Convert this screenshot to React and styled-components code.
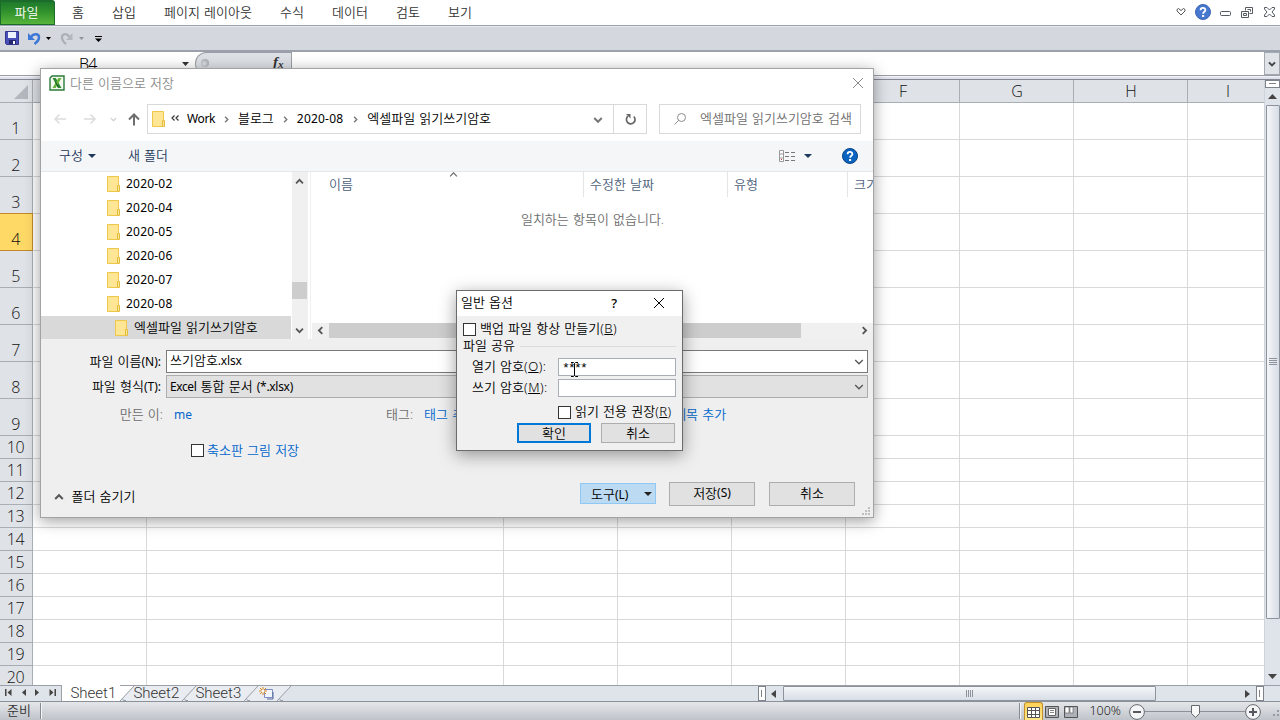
import React from "react";
import styled, { createGlobalStyle, css } from "styled-components";

const Global = createGlobalStyle`
  * { box-sizing: border-box; }
  html, body { margin: 0; padding: 0; overflow: hidden; background: #fff; }
  body { font-family: "Noto Sans", "Noto Sans CJK KR", sans-serif; font-size: 13px; font-weight: 350; }
`;

const Window = styled.div`
  position: relative;
  width: 1280px;
  height: 720px;
  display: flex;
  flex-direction: column;
  overflow: hidden;
  color: #000;
  white-space: nowrap;
  word-spacing: 0.8px;
`;

const Label = styled.span`
  flex: none;
  color: ${(p) => p.$color || "#000"};
  font-size: ${(p) => p.$size || 13}px;
  letter-spacing: ${(p) => p.$track || 0}px;
  line-height: 18px;
  margin-left: ${(p) => p.$ml || 0}px;
  margin-top: ${(p) => p.$mt || 0}px;
  font-weight: ${(p) => p.$weight || 350};
`;
const En = styled.span`
  font-size: ${(p) => p.$size || 12}px;
  font-weight: ${(p) => p.$weight || 400};
  letter-spacing: ${(p) => p.$track || 0}px;
`;
const Spacer = styled.div`
  flex: ${(p) => (p.$w ? `0 0 ${p.$w}px` : "1 1 0")};
`;
const Icon = styled.svg`
  display: block;
  flex: none;
  overflow: visible;
  margin-left: ${(p) => p.$ml || 0}px;
  margin-top: ${(p) => p.$mt || 0}px;
`;

/* ---------- ribbon ---------- */
const Ribbon = styled.div`
  flex: 0 0 26px;
  display: flex;
  border-bottom: 1px solid #9aa2ae;
  background: #fff;
`;
const FileTab = styled.div`
  width: 55px;
  height: 25px;
  display: flex;
  justify-content: center;
  align-items: center;
  padding: 0 2px 3px 0;
  color: #fff;
  background: linear-gradient(#1f7a2c, #2f8f2c 40%, #57b53a);
  border: 1px solid #1b6b2b;
  border-top-width: 2px;
  border-radius: 0 3px 0 0;
`;
const RibbonTab = styled.div`
  width: ${(p) => p.$w}px;
  height: 25px;
  display: flex;
  justify-content: center;
  align-items: center;
  padding-bottom: 2px;
`;
const QuickBar = styled.div`
  flex: 0 0 26px;
  display: flex;
  align-items: center;
  padding-bottom: 1px;
  background: #d4d8de;
  border-top: 1px solid #e6e9ee;
  border-bottom: 2px solid #9ba1ab;
`;

/* ---------- formula bar ---------- */
const FormulaBar = styled.div`
  flex: 0 0 24px;
  display: flex;
  border-bottom: 1px solid #9a9da3;
  background: #fff;
`;
const NameBox = styled.div`
  width: 195px;
  display: flex;
  align-items: center;
`;
const FxBox = styled.div`
  width: 97px;
  display: flex;
  align-items: center;
  padding-bottom: 3px;
  background: #dde1e6;
  border: solid #9a9da3;
  border-width: 1px 1px 0 1px;
  border-radius: 12px 0 0 12px;
`;
const Knob = styled.div`
  width: 8px;
  height: 8px;
  margin-left: 5px;
  border-radius: 50%;
  background: radial-gradient(circle at 40% 60%, #e3e6ea, #b3b7bd 60%, #a2a6ad);
`;
const Fx = styled.span`
  margin-left: 64px;
  font: italic bold 15px "Liberation Serif", serif;
  color: #333;
  sub { font-size: 11px; vertical-align: -1px; line-height: 0; }
`;
const ExpandButton = styled.div`
  width: 16px;
  height: 23px;
  display: flex;
  align-items: center;
  justify-content: center;
  background: #e0e3e8;
  border: 1px solid #a4a9b0;
`;
const Gutter = styled.div`
  flex: 0 0 4px;
  background: #e0e1ee;
  border-bottom: 1px solid #85888e;
  border-top: 1px solid #f3f3f9;
`;

/* ---------- sheet ---------- */
const SheetArea = styled.div`
  flex: 0 0 605px;
  display: flex;
  overflow: hidden;
`;
const Sheet = styled.div`
  width: 1264px;
  overflow: hidden;
`;
const SheetRow = styled.div`
  display: flex;
  height: ${(p) => p.$h}px;
`;
const headCell = css`
  flex: none;
  display: flex;
  justify-content: center;
  background: #dfe2e7;
  border-right: 1px solid #a9aeb5;
  border-bottom: 1px solid #a9aeb5;
  color: #111;
  font-family: "Open Sans", sans-serif;
  font-size: 16px;
  line-height: 22px;
`;
const ColHead = styled.div`
  ${headCell}
  width: ${(p) => p.$w}px;
  padding-left: 1px;
`;
const Corner = styled(ColHead)`
  align-items: flex-end;
  justify-content: flex-end;
  padding: 0 4px 3px 0;
`;
const RowHead = styled.div`
  ${headCell}
  width: 33px;
  align-items: flex-end;
  letter-spacing: -0.4px;
  padding-right: 1px;
  ${(p) =>
    p.$active &&
    css`
      background: #ffd966;
      border-color: #c08a2c;
      box-shadow: 0 -1px 0 #c08a2c;
    `}
`;
const Cell = styled.div`
  flex: none;
  width: ${(p) => p.$w}px;
  border-right: 1px solid #d9d9d9;
  border-bottom: 1px solid #d9d9d9;
`;

const VScroll = styled.div`
  width: 16px;
  display: flex;
  flex-direction: column;
  align-items: center;
  background: #dfe3ea;
  border-left: 1px solid #cfd3da;
`;
const SplitBox = styled.div`
  width: 15px;
  height: 8px;
  border: 1px solid #7d828b;
  background: #fff;
  padding: 2px 3px;
  &::after { content: ""; display: block; height: 1px; background: #7d828b; }
`;
const VThumb = styled.div`
  width: 14px;
  height: 514px;
  margin-top: 6px;
  display: flex;
  justify-content: center;
  align-items: center;
  padding-bottom: 2px;
  border: 1px solid #8d939d;
  border-radius: 1px;
  background: linear-gradient(90deg, #f4f6f9, #d8dde5);
`;

/* ---------- sheet tabs + horizontal scroll ---------- */
const TabStrip = styled.div`
  flex: 0 0 17px;
  display: flex;
  background: #dfe3ea;
  border-top: 1px solid #9a9fa8;
  border-bottom: 1px solid #8b919b;
`;
const TabNav = styled.div`
  width: 62px;
  display: flex;
  align-items: center;
  padding: 0 0 2px 5px;
  gap: 9.5px;
  border-right: 1px solid #9a9fa8;
`;
const SheetTab = styled.div`
  width: ${(p) => p.$w}px;
  margin-top: ${(p) => (p.$active ? -1 : 0)}px;
  padding: ${(p) => (p.$active ? "1px 0 0 9px" : 0)};
  background: ${(p) => (p.$active ? "#fff" : "#e9ecf0")};
  color: #333;
  font: 300 15px/15px Roboto, sans-serif;
  text-indent: -0.6px;
  position: relative;
  z-index: 1;
`;
const HSplit = styled.div`
  width: 8px;
  height: 15px;
  border: 1px solid #7d828b;
  background: #fff;
  padding: 3px 2px;
  &::after { content: ""; display: block; width: 1px; height: 7px; background: #7d828b; }
`;
const HThumb = styled.div`
  width: 373px;
  height: 15px;
  display: flex;
  justify-content: center;
  align-items: center;
  gap: 1px;
  border: 1px solid #8d939d;
  border-radius: 1px;
  background: linear-gradient(#f4f6f9, #d8dde5);
`;
const ScrollArrowBox = styled.div`
  width: ${(p) => p.$w}px;
  display: flex;
  align-items: center;
`;

/* ---------- status bar ---------- */
const StatusBar = styled.div`
  flex: 0 0 18px;
  display: flex;
  align-items: center;
  background: linear-gradient(#e4e6e9, #bfc4ca);
`;
const StatusSep = styled.div`
  width: 2px;
  height: 16px;
  border-left: 1px solid #868b93;
  border-right: 1px solid #f5f6f7;
`;
const ViewButton = styled.div`
  width: ${(p) => p.$w || 19}px;
  height: 18px;
  display: flex;
  justify-content: center;
  align-items: center;
  padding-top: 1px;
  ${(p) =>
    p.$active &&
    css`
      background: linear-gradient(#ffd257, #ffe58a);
      border: 1px solid #c2912e;
      border-bottom: 0;
      border-radius: 3px 3px 0 0;
    `}
`;
const ZoomTrack = styled.div`
  width: 100px;
  height: 18px;
  display: flex;
  align-items: center;
  justify-content: center;
  background: linear-gradient(#8d9299, #8d9299) 0 9px / 100% 1px no-repeat;
`;

/* ---------- save dialog ---------- */
const Dialog = styled.div`
  position: absolute;
  left: 40px;
  top: 68px;
  width: 834px;
  height: 450px;
  display: flex;
  flex-direction: column;
  border: 1px solid #a3a3a3;
  background: #efefef;
  box-shadow: 0 3px 14px rgba(0, 0, 0, 0.38);
`;
const DialogTitle = styled.div`
  flex: 0 0 35px;
  display: flex;
  align-items: flex-start;
  padding: 5px 10px 0 8px;
  background: #fff;
`;
const NavRow = styled.div`
  flex: 0 0 37px;
  display: flex;
  align-items: flex-start;
  background: #fff;
`;
const NavButtons = styled.div`
  width: 106px;
  height: 30px;
  display: flex;
  align-items: center;
`;
const AddressBar = styled.div`
  width: 500px;
  height: 30px;
  display: flex;
  align-items: center;
  border: 1px solid #d9d9d9;
`;
const RefreshBox = styled.div`
  width: 33px;
  height: 28px;
  display: flex;
  align-items: center;
  justify-content: center;
  border-left: 1px solid #d9d9d9;
`;
const SearchBox = styled.div`
  width: 202px;
  height: 30px;
  margin-left: 12px;
  display: flex;
  align-items: center;
  border: 1px solid #d9d9d9;
`;
const CommandBar = styled.div`
  flex: 0 0 31px;
  display: flex;
  align-items: center;
  background: #f5f6f8;
  border-bottom: 1px solid #e6e7e8;
`;
const Browser = styled.div`
  flex: 0 0 167px;
  display: flex;
  background: #fff;
  overflow: hidden;
`;
const Tree = styled.div`
  width: 250px;
`;
const TreeItem = styled.div`
  height: 24px;
  display: flex;
  align-items: center;
  padding-left: ${(p) => (p.$active ? 74 : 66)}px;
  background: ${(p) => (p.$active ? "#d9d9d9" : "transparent")};
`;
const TreeScroll = styled.div`
  width: 16px;
  margin-left: 1px;
  padding-right: 2px;
  display: flex;
  flex-direction: column;
  align-items: center;
  background: #f0f0f0;
`;
const TreeThumb = styled.div`
  width: 15px;
  height: 17px;
  margin: 97px -1px 0 0;
  background: #cdcdcd;
`;
const FileList = styled.div`
  flex: 1;
  margin-left: 2px;
  border-left: 1px solid #f0f0f0;
  display: flex;
  flex-direction: column;
  overflow: hidden;
`;
const ListHead = styled.div`
  height: 26px;
  display: flex;
`;
const ListCol = styled.div`
  flex: none;
  width: ${(p) => p.$w}px;
  height: 25px;
  display: flex;
  align-items: center;
  padding: 0 0 2px ${(p) => p.$pad || 6}px;
  border-right: 1px solid #e5e5e5;
`;
const EmptyNote = styled.div`
  flex: 1;
  padding-top: 12px;
  text-align: center;
  color: #6d6d6d;
  line-height: 18px;
  padding-left: 1px;
`;
const ListScroll = styled.div`
  height: 16px;
  margin-left: 1px;
  display: flex;
  align-items: center;
  padding-bottom: 1px;
  background: #f0f0f0;
`;
const ListThumb = styled.div`
  width: 472px;
  height: 15px;
  margin: 0 59px 0 4px;
  background: #cdcdcd;
`;
const FormRow = styled.div`
  flex: none;
  height: 23px;
  margin-top: ${(p) => p.$mt}px;
  display: flex;
  align-items: center;
`;
const FieldLabel = styled.div`
  width: ${(p) => p.$w}px;
  text-align: right;
  color: ${(p) => p.$color || "#000"};
  line-height: 18px;
  margin-top: ${(p) => p.$mt || 0}px;
`;
const Combo = styled.div`
  width: 702px;
  height: 23px;
  margin-left: 5px;
  padding: 0 3px 0 3px;
  display: flex;
  align-items: center;
  justify-content: space-between;
  border: 1px solid ${(p) => (p.$filled ? "#adadad" : "#7a7a7a")};
  background: ${(p) => (p.$filled ? "#e1e1e1" : "#fff")};
`;
const Check = styled.div`
  flex: none;
  width: 13px;
  height: 13px;
  border: 1px solid #333;
  background: #fff;
`;
const PushButton = styled.div`
  width: ${(p) => p.$w}px;
  height: ${(p) => p.$h}px;
  margin-left: ${(p) => p.$ml || 0}px;
  display: flex;
  align-items: center;
  justify-content: center;
  padding-bottom: ${(p) => p.$lift || 0}px;
  line-height: 18px;
  border: ${(p) => (p.$focus ? "2px solid #0078d7" : "1px solid #adadad")};
  background: #e1e1e1;
`;
const ToolsButton = styled.div`
  width: 76px;
  height: 21px;
  display: flex;
  align-items: center;
  padding: 1px 3px 0 10px;
  justify-content: space-between;
  border: 1px solid #8fc7f5;
  background: #bcdaf2;
`;

/* ---------- general options window ---------- */
const Options = styled.div`
  position: absolute;
  left: 456px;
  top: 290px;
  width: 227px;
  height: 161px;
  display: flex;
  flex-direction: column;
  border: 1px solid #6b6b6b;
  background: #f0f0f0;
  box-shadow: 0 4px 16px rgba(0, 0, 0, 0.38);
`;
const OptionsTitle = styled.div`
  flex: 0 0 25px;
  display: flex;
  align-items: center;
  padding-left: 4px;
  background: #fff;
`;
const OptRow = styled.div`
  flex: none;
  display: flex;
  align-items: center;
  height: ${(p) => p.$h}px;
  margin-top: ${(p) => p.$mt || 0}px;
  padding-left: ${(p) => p.$pl || 6}px;
  position: relative;
`;
const Rule = styled.div`
  flex: 1;
  height: 1px;
  margin: 1px 6px 0 5px;
  background: #dcdcdc;
`;
const OptLabel = styled.div`
  width: 86px;
  line-height: 18px;
  margin-top: -2px;
`;
const Field = styled.div`
  width: 118px;
  height: 18px;
  padding: 1px 0 0 3px;
  border: 1px solid #a9adb5;
  background: #fff;
  font: 13px/17px "Liberation Mono", monospace;
  letter-spacing: -1.8px;
`;
const Caret = styled.div`
  position: absolute;
  left: 114px;
  top: 4px;
`;

const Tri = ({ w = 7, h = 4, color = "#000", ml, mt }) => (
  <Icon width={w} height={h} viewBox="0 0 7 4" preserveAspectRatio="none" $ml={ml} $mt={mt}>
    <path d="M0 0H7L3.5 4Z" fill={color} />
  </Icon>
);
const Chevron = ({ dir = "down", w = 10, color = "#555", sw = 2, ml, mt }) => {
  const turn = { down: 0, up: 180, left: 90, right: -90 }[dir];
  return (
    <Icon width={w} height={w} viewBox="0 0 10 10" $ml={ml} $mt={mt}>
      <path d="M1.2 3L5 6.8L8.8 3" fill="none" stroke={color} strokeWidth={sw} transform={`rotate(${turn} 5 5)`} />
    </Icon>
  );
};
const Folder = ({ ml }) => (
  <Icon width="13" height="16" viewBox="0 0 13 16" $ml={ml}>
    <path d="M.5 .5H11.5V15.5H.5Z" fill="#ffe694" stroke="#edc84c" />
    <path d="M10.5 9.5H12.5V15.5H10.5Z" fill="#ffe694" stroke="#e5bd3e" />
  </Icon>
);
const Help = ({ ml, mt, fill = "#0a63c0", rim = "#0b4586" }) => (
  <Icon width="16" height="16" viewBox="0 0 16 16" $ml={ml} $mt={mt}>
    <circle cx="8" cy="8" r="7.5" fill={fill} stroke={rim} />
    <path d="M5.6 6.2C5.6 3.2 10.4 3.2 10.4 6C10.4 7.7 8.1 7.8 8.1 9.8" fill="none" stroke="#fff" strokeWidth="1.8" />
    <rect x="7.1" y="11" width="2" height="2" fill="#fff" />
  </Icon>
);
const Cross = ({ s = 10, color = "#000", ml, mt }) => (
  <Icon width={s} height={s} viewBox="0 0 10 10" $ml={ml} $mt={mt}>
    <path d="M0 0L10 10M10 0L0 10" stroke={color} strokeWidth="1" />
  </Icon>
);
const Slant = ({ left, right }) => (
  <Icon width="14" height="15" viewBox="0 0 14 15">
    <path d="M0 0H14L0 15Z" fill={left} />
    <path d="M14 0V15H0Z" fill={right} />
    <path d="M0 15L14 0" stroke="#9a9fa8" fill="none" />
    <path d="M2.5 12.5L3.5 14.5H6" stroke="#9a9fa8" fill="none" />
  </Icon>
);
const Zoomer = ({ plus }) => (
  <Icon width="16" height="16" viewBox="0 0 16 16" $mt={2}>
    <circle cx="8" cy="8" r="7.4" fill="#f4f5f6" stroke="#65696f" />
    <path d={plus ? "M4 8H12M8 4V12" : "M4 8H12"} stroke="#55585d" strokeWidth="2" />
  </Icon>
);

const columns = [["A", 114], ["B", 357], ["C", 114], ["D", 114], ["E", 114], ["F", 114], ["G", 114], ["H", 114], ["I", 80]];
const rows = Array.from({ length: 20 }, (_, i) => ({ n: i + 1, h: i < 9 ? 37 : 23 }));
const tabs = [["홈", 40], ["삽입", 52], ["페이지 레이아웃", 116], ["수식", 52], ["데이터", 64], ["검토", 52], ["보기", 52]];
const folders = ["2020-02", "2020-04", "2020-05", "2020-06", "2020-07", "2020-08"];

const RibbonArea = () => (
  <>
    <Ribbon>
      <FileTab>파일</FileTab>
      <Spacer $w={3} />
      {tabs.map(([t, w]) => (
        <RibbonTab key={t} $w={w}><Label $color="#333">{t}</Label></RibbonTab>
      ))}
      <Spacer />
      <Icon width="10" height="8" viewBox="0 0 10 8" $mt={8}>
        <path d="M1 1.5L2.5 .5L5 2.5L7.5 .5L9 1.5V3L5 7L1 3Z" fill="#fff" stroke="#555" />
      </Icon>
      <Help ml={9} mt={4} fill="#4778cf" rim="#3c66b4" />
      <Icon width="11" height="5" viewBox="0 0 11 5" $ml={9} $mt={11}>
        <rect x=".5" y=".5" width="10" height="4" rx="1" fill="#fff" stroke="#555a63" />
      </Icon>
      <Icon width="12" height="11" viewBox="0 0 12 11" $ml={10} $mt={7}>
        <path d="M4.5 3.5V.5H11.5V6.5H8.5M.5 4.5H7.5V10.5H.5ZM2.5 6.5H5.5V8.5H2.5ZM6.5 2.5H9.5V4.5" fill="none" stroke="#555a63" />
      </Icon>
      <Icon width="11" height="10" viewBox="0 0 11 10" $ml={11} $mt={7}>
        <path d="M.5 .5H3L5.5 3L8 .5H10.5V2L8 5L10.5 8V9.5H8L5.5 7L3 9.5H.5V8L3 5L.5 2Z" fill="#fff" stroke="#555a63" />
      </Icon>
      <Spacer $w={5} />
    </Ribbon>
    <QuickBar>
      <Icon width="14" height="14" viewBox="0 0 14 14" $ml={5}>
        <path d="M.5 .5H13.5V13.5H1.5L.5 12.5Z" fill="#4a4fb8" stroke="#33368f" />
        <path d="M3 1H11V7H3Z" fill="#eef2ff" />
        <path d="M4 9H11V13H4Z" fill="#23266e" />
        <path d="M8 10H10V13H8Z" fill="#fff" />
      </Icon>
      <Icon width="13" height="13" viewBox="0 0 13 13" $ml={9}>
        <path d="M3 5C6 .8 11.500 1.500 11 6C10.700 8.500 8.500 10.500 6.500 12" fill="none" stroke="#3c78d8" strokeWidth="2.4" />
        <path d="M0 1V8H7Z" fill="#3c78d8" />
      </Icon>
      <Tri w={5} h={3} ml={5} />
      <Icon width="13" height="13" viewBox="0 0 13 13" $ml={9}>
        <path d="M9.500 5C6.500 .8 1.500 1.500 2 6C2.300 8.500 4 10.500 6 12" fill="none" stroke="#abaeb3" strokeWidth="2.2" />
        <path d="M12.500 1V8H6Z" fill="#b4b7bc" />
      </Icon>
      <Tri w={5} h={3} color="#8f939a" ml={6} />
      <Icon width="7" height="6" viewBox="0 0 7 6" $ml={11} $mt={2}>
        <path d="M0 .5H7" stroke="#000" />
        <path d="M0 2.500H7L3.500 6Z" />
      </Icon>
    </QuickBar>
    <FormulaBar>
      <NameBox>
        <Label $size={16} $ml={79} $track={-0.8}>B4</Label>
        <Spacer />
        <Tri color="#333" />
        <Spacer $w={6} />
      </NameBox>
      <FxBox><Knob /><Fx>f<sub>x</sub></Fx></FxBox>
      <Spacer />
      <ExpandButton><Chevron w={8} sw={2.5} color="#444" /></ExpandButton>
    </FormulaBar>
    <Gutter />
  </>
);

const Grid = () => (
  <SheetArea>
    <Sheet>
      <SheetRow $h={23}>
        <Corner $w={33}>
          <Icon width="14" height="14" viewBox="0 0 14 14"><path d="M14 0V14H0Z" fill="#b4b8be" /></Icon>
        </Corner>
        {columns.map(([c, w]) => <ColHead key={c} $w={w}>{c}</ColHead>)}
      </SheetRow>
      {rows.map((r) => (
        <SheetRow key={r.n} $h={r.h}>
          <RowHead $active={r.n === 4}>{r.n}</RowHead>
          {columns.map(([c, w]) => <Cell key={c} $w={w} />)}
        </SheetRow>
      ))}
    </Sheet>
    <VScroll>
      <SplitBox />
      <Icon width="9" height="5" viewBox="0 0 9 5" $mt={6}><path d="M0 5L4.500 0L9 5Z" fill="#444" /></Icon>
      <VThumb>
        <Icon width="8" height="7" viewBox="0 0 8 7"><path d="M0 .5H8M0 2.500H8M0 4.500H8M0 6.500H8" stroke="#8d939d" /></Icon>
      </VThumb>
      <Spacer />
      <Tri w={9} h={5} color="#444" />
      <Spacer $w={6} />
    </VScroll>
  </SheetArea>
);

const Footer = () => (
  <>
    <TabStrip>
      <TabNav>
        <Icon width="7" height="7" viewBox="0 0 7 7"><path d="M0 0H1.500V7H0ZM6.500 0V7L2.500 3.500Z" fill="#444" /></Icon>
        <Icon width="4" height="7" viewBox="0 0 4 7"><path d="M4 0V7L0 3.500Z" fill="#444" /></Icon>
        <Icon width="4" height="7" viewBox="0 0 4 7"><path d="M0 0V7L4 3.500Z" fill="#444" /></Icon>
        <Icon width="7" height="7" viewBox="0 0 7 7"><path d="M5.500 0H7V7H5.500ZM.5 0V7L4.500 3.500Z" fill="#444" /></Icon>
      </TabNav>
      <SheetTab $active $w={58}>Sheet1</SheetTab>
      <Slant left="#fff" right="#e9ecf0" />
      <SheetTab $w={48}>Sheet2</SheetTab>
      <Slant left="#e9ecf0" right="#e9ecf0" />
      <SheetTab $w={48}>Sheet3</SheetTab>
      <Slant left="#e9ecf0" right="#e9ecf0" />
      <SheetTab $w={19}>
        <Icon width="15" height="13" viewBox="0 0 15 13" $ml={1} $mt={1}>
          <path d="M5.500 2.500H13.500V10.500H5.500Z" fill="#f3f6ff" stroke="#7d8fc0" />
          <path d="M8 12L14 12V5" fill="none" stroke="#5568a0" />
          <path d="M4 0V8M0 4H8M1 1L7 7M7 1L1 7" stroke="#d98a1f" />
          <circle cx="4" cy="4" r="1.500" fill="#fff" />
        </Icon>
      </SheetTab>
      <Slant left="#e9ecf0" right="#dfe3ea" />
      <Spacer />
      <HSplit />
      <ScrollArrowBox $w={17}>
        <Icon width="5" height="8" viewBox="0 0 5 8" $ml={5}><path d="M5 0V8L0 4Z" fill="#444" /></Icon>
      </ScrollArrowBox>
      <HThumb>
        <Icon width="8" height="7" viewBox="0 0 8 7"><path d="M.5 0V7M2.500 0V7M4.500 0V7M6.500 0V7" stroke="#8d939d" /></Icon>
      </HThumb>
      <ScrollArrowBox $w={100}>
        <Icon width="5" height="8" viewBox="0 0 5 8" $ml={89}><path d="M0 0V8L5 4Z" fill="#444" /></Icon>
      </ScrollArrowBox>
      <HSplit />
      <Spacer $w={16} />
    </TabStrip>
    <StatusBar>
      <Label $ml={7} $mt={-2} $color="#333">준비</Label>
      <Spacer $w={9} />
      <StatusSep />
      <Spacer />
      <StatusSep />
      <Spacer $w={3} />
      <ViewButton $active>
        <Icon width="13" height="11" viewBox="0 0 13 11">
          <path d="M.5 .5H12.500V10.500H.5ZM.5 3.500H12.500M.5 7.500H12.500M4.500 .5V10.500M8.500 .5V10.500" fill="#fff" stroke="#555" />
        </Icon>
      </ViewButton>
      <ViewButton $w={18}>
        <Icon width="14" height="12" viewBox="0 0 14 12">
          <path d="M.5 .5H13.500V11.500H.5Z" fill="#aeb2b8" stroke="#555" />
          <path d="M3.500 2.500H10.500V9.500H3.500Z" fill="#fff" stroke="#666" />
          <path d="M5 4.500H9M5 6.500H9" stroke="#888" />
        </Icon>
      </ViewButton>
      <ViewButton>
        <Icon width="14" height="12" viewBox="0 0 14 12">
          <path d="M.5 .5H13.500V11.500H.5Z" fill="#aeb2b8" stroke="#555" />
          <path d="M1 1H5V7H1ZM6 1H9V7H6Z" fill="#fff" stroke="#555" strokeWidth=".6" />
        </Icon>
      </ViewButton>
      <Label $ml={9} $size={12.5} $color="#222">100%</Label>
      <Spacer $w={8} />
      <Zoomer />
      <ZoomTrack>
        <Icon width="9" height="13" viewBox="0 0 9 13">
          <path d="M.5 .5H8.500V8.500L4.500 12.300L.5 8.500Z" fill="#f8f8f9" stroke="#65696f" />
        </Icon>
      </ZoomTrack>
      <Zoomer plus />
      <Icon width="11" height="8" viewBox="0 0 11 8" $ml={8} $mt={6}>
        <path d="M8 0h2v2h-2zM4 4h2v2h-2zM8 4h2v2h-2z" fill="#9599a0" />
      </Icon>
    </StatusBar>
  </>
);

const SaveDialog = () => (
  <Dialog>
    <DialogTitle>
      <Icon width="16" height="16" viewBox="0 0 16 16" $mt={1}>
        <path d="M1 3L3 1H15V15H1Z" fill="#f3f9ee" stroke="#2b7a3a" strokeWidth="1.4" />
        <path d="M3.500 3H6.800L12.500 13H9.200Z" fill="#2f8b33" />
        <path d="M12.500 3H9.400L3.500 13H6.600Z" fill="#62b53a" />
        <path d="M6.500 7L9.500 12.500" stroke="#1b5e25" strokeWidth="1.2" />
      </Icon>
      <Label $ml={5} $color="#8c8c8c">다른 이름으로 저장</Label>
      <Spacer />
      <Cross s={10} color="#8a8a8a" mt={4} />
    </DialogTitle>
    <NavRow>
      <NavButtons>
        <Icon width="12" height="10" viewBox="0 0 12 10" $ml={13}>
          <path d="M12 5H1M5.500 .5L1 5L5.500 9.500" fill="none" stroke="#dcdcdc" strokeWidth="1.500" />
        </Icon>
        <Icon width="12" height="10" viewBox="0 0 12 10" $ml={18}>
          <path d="M0 5H11M6.500 .5L11 5L6.500 9.500" fill="none" stroke="#dcdcdc" strokeWidth="1.500" />
        </Icon>
        <Chevron w={7} color="#d5d5d5" ml={14} />
        <Icon width="12" height="13" viewBox="0 0 12 13" $ml={11} $mt={1}>
          <path d="M6 12.500V1.500M1 6.500L6 1.500L11 6.500" fill="none" stroke="#6e6e6e" strokeWidth="2" />
        </Icon>
      </NavButtons>
      <AddressBar>
        <Folder ml={4} />
        <Icon width="8" height="6" viewBox="0 0 8 6" $ml={6} $mt={-3}>
          <path d="M3.500 .5L1 3L3.500 5.500M7.500 .5L5 3L7.500 5.500" fill="none" stroke="#333" strokeWidth="1.200" />
        </Icon>
        <Label $size={12} $weight={400} $ml={8} $track={-0.4}>Work</Label>
        <Chevron dir="right" w={7} color="#777" ml={8} mt={1} />
        <Label $ml={8} $mt={-2}>블로그</Label>
        <Chevron dir="right" w={7} color="#777" ml={8} mt={1} />
        <Label $size={12} $weight={400} $ml={8} $track={0.2}>2020-08</Label>
        <Chevron dir="right" w={7} color="#777" ml={9} mt={1} />
        <Label $ml={8} $mt={-2}>엑셀파일 읽기쓰기암호</Label>
        <Spacer />
        <Chevron w={10} color="#777" mt={1} />
        <Spacer $w={10} />
        <RefreshBox>
          <Icon width="11" height="12" viewBox="0 0 11 12">
            <path d="M8.800 3.500A4.300 4.300 0 1 1 3 3.200" fill="none" stroke="#666" strokeWidth="1.700" />
            <path d="M1 1H5.500V5.500Z" fill="#666" />
          </Icon>
        </RefreshBox>
      </AddressBar>
      <SearchBox>
        <Icon width="12" height="12" viewBox="0 0 12 12" $ml={14}>
          <circle cx="7.500" cy="4.500" r="4" fill="none" stroke="#8a8a8a" />
          <path d="M4.500 7.500L.5 11.500" stroke="#8a8a8a" />
        </Icon>
        <Label $ml={14} $mt={-2} $color="#6d6d6d">엑셀파일 읽기쓰기암호 검색</Label>
      </SearchBox>
    </NavRow>
    <CommandBar>
      <Label $ml={18} $mt={-2} $color="#1e395b">구성</Label>
      <Tri w={8} h={4} ml={5} color="#1e395b" />
      <Label $ml={32} $mt={-2} $color="#1e395b">새 폴더</Label>
      <Spacer />
      <Icon width="16" height="12" viewBox="0 0 16 12">
        <path d="M.5 .5H4.500V11.500H.5ZM.5 4H4.500M.5 8H4.500" fill="#fff" stroke="#999" />
        <path d="M6 2.500H10M12 2.500H16M6 6.500H10M12 6.500H16M6 10.500H10M12 10.500H16" stroke="#777" />
        <rect x="2" y="9" width="1" height="1" fill="#c33" />
      </Icon>
      <Tri w={8} h={4} ml={9} color="#1e395b" />
      <Help ml={30} />
      <Spacer $w={15} />
    </CommandBar>
    <Browser>
      <Tree>
        {folders.map((f) => (
          <TreeItem key={f}><Folder /><Label $size={12} $weight={400} $ml={6} $track={0.2}>{f}</Label></TreeItem>
        ))}
        <TreeItem $active><Folder /><Label $ml={6} $mt={-2}>엑셀파일 읽기쓰기암호</Label></TreeItem>
      </Tree>
      <TreeScroll>
        <Chevron dir="up" w={9} mt={5} />
        <TreeThumb style={{ marginTop: 96 }} />
        <Spacer />
        <Chevron w={9} />
        <Spacer $w={4} />
      </TreeScroll>
      <FileList>
        <ListHead>
          <ListCol $w={273} $pad={18}>
            <Label $color="#4c607a">이름</Label>
            <Chevron dir="up" w={9} color="#666" sw={1.2} ml={96} mt={-19} />
          </ListCol>
          <ListCol $w={144}><Label $color="#4c607a">수정한 날짜</Label></ListCol>
          <ListCol $w={120}><Label $color="#4c607a">유형</Label></ListCol>
          <ListCol $w={60}><Label $color="#4c607a">크기</Label></ListCol>
        </ListHead>
        <EmptyNote>일치하는 항목이 없습니다.</EmptyNote>
        <ListScroll>
          <Chevron dir="left" w={9} ml={4} />
          <ListThumb />
          <Chevron dir="right" w={9} />
        </ListScroll>
      </FileList>
    </Browser>
    <FormRow $mt={11}>
      <FieldLabel $w={120}>파일 이름<En>(N):</En></FieldLabel>
      <Combo><Label $mt={-2}>쓰기암호<En $track={-0.2}>.xlsx</En></Label><Chevron sw={1.3} /></Combo>
    </FormRow>
    <FormRow $mt={2}>
      <FieldLabel $w={120}>파일 형식<En>(T):</En></FieldLabel>
      <Combo $filled><Label><En $track={-0.4}>Excel</En> 통합 문서 <En $track={-0.3}>(*.xlsx)</En></Label><Chevron sw={1.3} /></Combo>
    </FormRow>
    <FormRow $mt={5}>
      <FieldLabel $w={122} $mt={-2} $color="#6d6d6d">만든 이:</FieldLabel>
      <Label $size={12} $weight={400} $ml={11} $color="#0066cc">me</Label>
      <Label $ml={194} $mt={-2} $color="#6d6d6d">태그:</Label>
      <Label $ml={11} $mt={-2} $color="#0066cc">태그 추가</Label>
      <Label $ml={198} $mt={-2} $color="#0066cc">제목 추가</Label>
    </FormRow>
    <FormRow $mt={13}>
      <Spacer $w={150} />
      <Check />
      <Label $ml={3} $mt={-1} $color="#0066cc">축소판 그림 저장</Label>
    </FormRow>
    <FormRow $mt={20}>
      <Chevron dir="up" w={10} ml={13} mt={6} />
      <Label $ml={7.5} $mt={4}>폴더 숨기기</Label>
      <Spacer />
      <ToolsButton><Label>도구<En>(L)</En></Label><Tri w={8} h={4} color="#222" /></ToolsButton>
      <PushButton $w={86} $h={24} $ml={13} $lift={2}>저장<En>(S)</En></PushButton>
      <PushButton $w={86} $h={24} $ml={14} $lift={2}>취소</PushButton>
      <Spacer $w={18} />
    </FormRow>
    <FormRow $mt={1}>
      <Spacer />
      <Icon width="8" height="8" viewBox="0 0 8 8" $mt={-13}>
        <path d="M6 0h2v2h-2zM3 3h2v2h-2zM6 3h2v2h-2zM0 6h2v2h-2zM3 6h2v2h-2zM6 6h2v2h-2z" fill="#bfbfbf" />
      </Icon>
      <Spacer $w={3} />
    </FormRow>
  </Dialog>
);

const OptionsWindow = () => (
  <Options>
    <OptionsTitle>
      <Label $mt={-4}>일반 옵션</Label>
      <Spacer />
      <Label $size={13} $weight={500} $mt={-1}>?</Label>
      <Spacer $w={37} />
      <Cross s={10} mt={-1} />
      <Spacer $w={18} />
    </OptionsTitle>
    <OptRow $h={19} $mt={4}>
      <Check /><Label $ml={4} $mt={-3}>백업 파일 항상 만들기<En $size={13} $weight={350} $track={0.5}>(<u>B</u>)</En></Label>
    </OptRow>
    <OptRow $h={14}>
      <Label $mt={-2}>파일 공유</Label><Rule />
    </OptRow>
    <OptRow $h={18} $mt={5} $pl={15}>
      <OptLabel>열기 암호<En $size={13} $weight={350} $track={0.5}>(<u>O</u>):</En></OptLabel>
      <Field>****</Field>
      <Caret>
        <Icon width="7" height="15" viewBox="0 0 7 15">
          <path d="M0 .5H2.500L3.500 1.500L4.500 .5H7M0 14.500H2.500L3.500 13.500L4.500 14.500H7M3.500 1.500V13.500" fill="none" stroke="#000" />
        </Icon>
      </Caret>
    </OptRow>
    <OptRow $h={18} $mt={3} $pl={15}>
      <OptLabel>쓰기 암호<En $size={13} $weight={350} $track={0.5}>(<u>M</u>):</En></OptLabel>
      <Field />
    </OptRow>
    <OptRow $h={19} $mt={6} $pl={101}>
      <Check /><Label $ml={4} $mt={-3}>읽기 전용 권장<En $size={13} $weight={350} $track={0.5}>(<u>R</u>)</En></Label>
    </OptRow>
    <OptRow $h={20} $mt={1} $pl={60}>
      <PushButton $w={74} $h={20} $focus>확인</PushButton>
      <PushButton $w={74} $h={20} $ml={10}>취소</PushButton>
    </OptRow>
  </Options>
);

export default function App() {
  return (
    <Window>
      <Global />
      <RibbonArea />
      <Grid />
      <Footer />
      <SaveDialog />
      <OptionsWindow />
    </Window>
  );
}
